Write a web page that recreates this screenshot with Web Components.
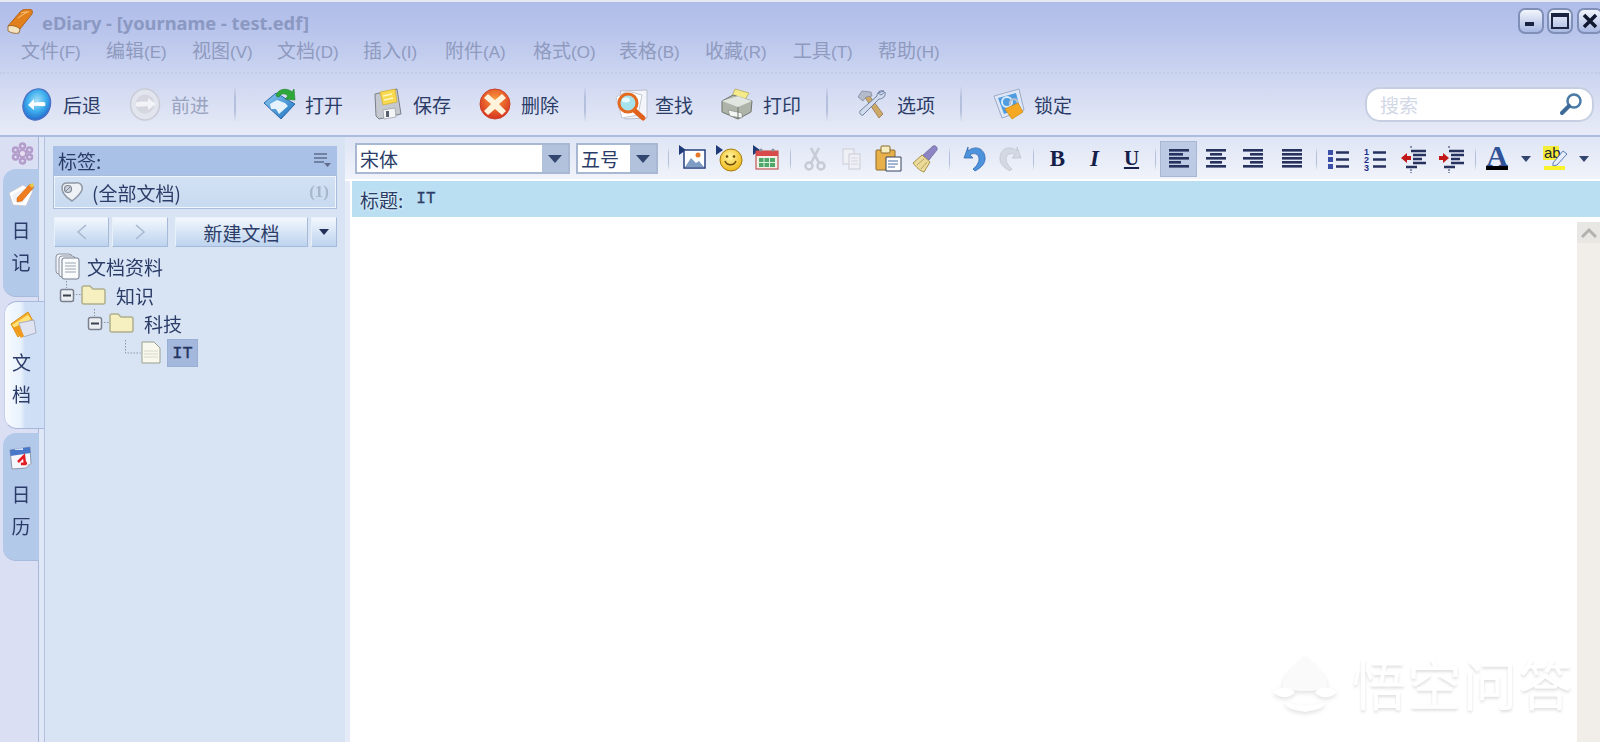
<!DOCTYPE html>
<html lang="zh">
<head>
<meta charset="utf-8">
<title>eDiary</title>
<style>
  html, body { margin: 0; height: 742px; overflow: hidden; background: #fff; }
  body { font: 19px "Noto Sans CJK SC", "Noto Sans", sans-serif; color: #2b3a66; }
</style>
</head>
<body>
<ed-app>
  <ed-header slot="header">
    <ed-tool icon="back" label="后退"></ed-tool>
    <ed-tool icon="forward" label="前进" disabled></ed-tool>
    <ed-sep></ed-sep>
    <ed-tool icon="open" label="打开"></ed-tool>
    <ed-tool icon="save" label="保存"></ed-tool>
    <ed-tool icon="remove" label="删除"></ed-tool>
    <ed-sep></ed-sep>
    <ed-tool icon="find" label="查找"></ed-tool>
    <ed-tool icon="print" label="打印"></ed-tool>
    <ed-sep></ed-sep>
    <ed-tool icon="options" label="选项"></ed-tool>
    <ed-sep style="margin-right:30px"></ed-sep>
    <ed-tool icon="lock" label="锁定"></ed-tool>
  </ed-header>
  <ed-tabs slot="tabs">
    <ed-tab icon="tabdiary" label="日记"></ed-tab>
    <ed-tab icon="tabdocs" label="文档" active></ed-tab>
    <ed-tab icon="tabcal" label="日历"></ed-tab>
  </ed-tabs>
  <ed-sidebar slot="sidebar">
    <ed-tree-row kind="root">文档资料</ed-tree-row>
    <ed-tree-row kind="folder" level="0">知识</ed-tree-row>
    <ed-tree-row kind="folder" level="1">科技</ed-tree-row>
    <ed-tree-row kind="leaf" selected style="margin-top:2px">IT</ed-tree-row>
  </ed-sidebar>
  <ed-formatbar slot="format">
    <ed-fmt icon="picture"></ed-fmt><ed-fmt icon="smile"></ed-fmt><ed-fmt icon="calendar"></ed-fmt>
    <ed-sep small></ed-sep>
    <ed-fmt icon="cut"></ed-fmt><ed-fmt icon="copy"></ed-fmt><ed-fmt icon="paste"></ed-fmt><ed-fmt icon="broom"></ed-fmt>
    <ed-sep small></ed-sep>
    <ed-fmt icon="undo"></ed-fmt><ed-fmt icon="redo"></ed-fmt>
    <ed-sep small style="margin:0 5px 0 4px"></ed-sep>
    <ed-fmt text="B"></ed-fmt><ed-fmt text="I"></ed-fmt><ed-fmt text="U"></ed-fmt>
    <ed-sep small style="margin:0 4px 0 5px"></ed-sep>
    <ed-fmt icon="alignleft" pressed></ed-fmt><ed-fmt icon="aligncenter"></ed-fmt><ed-fmt icon="alignright"></ed-fmt><ed-fmt icon="justify" style="margin-left:2px"></ed-fmt>
    <ed-sep small style="margin:0 2px 0 6px"></ed-sep>
    <ed-fmt icon="bullets"></ed-fmt><ed-fmt icon="numbers"></ed-fmt><ed-fmt icon="outdent" style="margin-left:2px"></ed-fmt><ed-fmt icon="indent" style="margin-left:1px"></ed-fmt>
    <ed-sep small style="margin:0 2px 0 5px"></ed-sep>
    <ed-fmt icon="fontcolor"></ed-fmt><ed-fmt arrow></ed-fmt><ed-fmt icon="highlight"></ed-fmt><ed-fmt arrow></ed-fmt>
  </ed-formatbar>
  <ed-editor slot="editor" doc-title="IT"></ed-editor>
</ed-app>

<script>
const CJK = '"Noto Sans CJK SC", "Noto Sans", sans-serif';

// every icon is drawn in real pixels, the viewBox is the same as its size
const ICONS = {
  back: `<defs><radialGradient id="g" cx=".45" cy=".4" r=".65"><stop offset="0" stop-color="#a8e0f8"/><stop offset=".5" stop-color="#3fb0ee"/><stop offset="1" stop-color="#1f62c8"/></radialGradient></defs>
    <ellipse cx="16" cy="16.5" rx="13.500" ry="16" transform="rotate(22 16 16)" fill="url(#g)" stroke="#4a6fc4" stroke-width="1.2"/>
    <path d="M7 17l6-6v3.500c4 0 8-1 11 0 .5 1 .5 2.500 0 3.500-3 .5-7-.5-11 0v4z" fill="#fff"/>`,
  forward: `<ellipse cx="16" cy="16.500" rx="14.500" ry="15.500" fill="#e2e5ee" stroke="#c9ccd6" stroke-width="1.500"/>
    <circle cx="16" cy="16" r="9.500" fill="#d4d7e0"/>
    <path d="M27 16l-8-6v3.500c-4 0-8-.5-12 1-.5 2-.5 3 0 4 4 .5 8-.5 12 0V22z" fill="#f2f3f7"/>`,
  open: `<defs><linearGradient id="g" x1="0" y1="0" x2="1" y2="1"><stop offset="0" stop-color="#8ccbf2"/><stop offset="1" stop-color="#1b6fc0"/></linearGradient></defs>
    <path d="M1 15L13 5l19 11-14 15z" fill="url(#g)" stroke="#2b6aa8"/>
    <path d="M7 16l7-4 8 3 3 3-9 8-3-5-5 0z" fill="#e6f3fc"/>
    <path d="M13 8C14 1 24-1 29 4l2-3 1 11-10-1 3-3c-3-3-7-3-9 1z" fill="#2fa83a" stroke="#1f7d2a" stroke-width=".6"/>`,
  save: `<path d="M4 6l22-5 4 25-22 5-3-3z" fill="#c5c9cf" stroke="#7a808a"/>
    <path d="M9 4l15-3 2 13-14 3z" fill="#f8d84e" stroke="#c9a52c" stroke-width=".6"/>
    <path d="M12 8l9-2M13 12l9-2" stroke="#fff7c0" stroke-width="1.500"/>
    <path d="M12 22l12-2 1 9-12 2z" fill="#f4f5f7" stroke="#8b9099" stroke-width=".6"/>
    <rect x="15" y="23" width="3" height="6" fill="#586070"/>`,
  remove: `<defs><radialGradient id="g" cx=".5" cy=".35" r=".7"><stop offset="0" stop-color="#fb9b3c"/><stop offset="1" stop-color="#d52a1c"/></radialGradient></defs>
    <circle cx="16" cy="16" r="15" fill="url(#g)" stroke="#c9402a"/>
    <path d="M9 6l7 6 7-6 4 4-7 6 7 7-4 4-7-6-7 6-4-4 7-7-7-6z" fill="#fff3dc"/>`,
  find: `<path d="M7 3l27-1v28l-22 1z" fill="#f3f5fa" stroke="#b9bfd0"/>
    <path d="M3 9l12-6 14 4-4 20-16 3z" fill="#fff" stroke="#c3c8d4"/>
    <path d="M21 22l9 8" stroke="#e2611a" stroke-width="5" stroke-linecap="round"/>
    <circle cx="15" cy="15" r="9" fill="#a7e3ec" stroke="#e46a20" stroke-width="3"/>
    <ellipse cx="13" cy="12" rx="4" ry="2.500" fill="#e6fbff"/>`,
  print: `<path d="M14 1l14 4-5 9-13-3z" fill="#f4ea8a" stroke="#b2ab58" stroke-width=".8"/>
    <path d="M1 13l11-6 19 6-1 11-13 7L1 24z" fill="#aeb4a9" stroke="#70776f"/>
    <path d="M1 13l16 6 14-6-14-5z" fill="#e2e6e0"/>
    <path d="M7 22l14 3v5l-12-2z" fill="#f4f6f4" stroke="#7c837c" stroke-width=".6"/>
    <path d="M17 19v12" stroke="#70776f"/>`,
  options: `<path d="M9 8l4-2 15 20-4 4z" fill="#cda868" stroke="#8d6f3e" stroke-width=".7"/>
    <path d="M3 9l4-6 9 1 1 4-6 1-3 4z" fill="#b4bbcb" stroke="#7a8398" stroke-width=".7"/>
    <path d="M29 3c-4-1-7 1-7 5L5 23c-1 2 1 5 3 4L24 11c4 0 7-3 6-7l-4 3-3-2z" fill="#d3dcec" stroke="#6d80a5" stroke-width="1"/>`,
  lock: `<path d="M2 8L27 1l5 21-22 8z" fill="#dfe7f6" stroke="#9cabc8"/>
    <path d="M6 10l18-5 4 15-16 6z" fill="#4f9de0"/>
    <circle cx="15" cy="14" r="5" fill="none" stroke="#d8ebfa" stroke-width="2"/>
    <path d="M18 17c-1-6 6-8 7.500-3l.5 3" fill="none" stroke="#b9c2d2" stroke-width="2"/>
    <path d="M13 21l13-6 5 9-11 7z" fill="#f5a823" stroke="#d08a10" stroke-width=".7"/>`,
  tabdiary: `<path d="M1 12L15 4l10 6-7 15-13-1z" fill="#fff" stroke="#c8ccd6"/>
    <path d="M4 14l11-6 6 4-6 10-9-1z" fill="#f1f2f6"/>
    <path d="M9 17L22 3l4 3-12 14-5 1z" fill="#ef7d1e" stroke="#c65f0e" stroke-width=".5"/>
    <path d="M21 4l4-2 1 3-2 2z" fill="#e8c84a"/>`,
  tabdocs: `<path d="M2 13L19 1l5 9-15 16z" fill="#f7b42b" stroke="#d98a14"/>
    <path d="M3 14L19 4l3 4-14 11z" fill="#ffe27c"/>
    <path d="M10 12l15-3 2 13-13 4z" fill="#dfe4f0" stroke="#a9b0c4"/>
    <path d="M4 17l6-3 5 11-3 2z" fill="#f19b1d"/>`,
  tabcal: `<path d="M2 5l20-3 1 17-5 4-14 1z" fill="#f6f7fb" stroke="#8f98ad"/>
    <path d="M2 5l20-3 .5 6L2.500 11z" fill="#4a78c8"/>
    <path d="M7 4l8-1v2H7z" fill="#cfe0f8"/>
    <path d="M10 17l6-6 1 8-4 0 6-1" fill="none" stroke="#e41c24" stroke-width="2.500"/>
    <path d="M18 23l5-4-3 0z" fill="#c0c5d2"/>`,
  gear: `<g fill="none" stroke="#b49ccb" stroke-width="2.500"><circle cx="11.500" cy="4" r="2.500"/><circle cx="11.500" cy="19" r="2.500"/><circle cx="4.500" cy="8" r="2.500"/><circle cx="18.500" cy="8" r="2.500"/><circle cx="4.500" cy="15" r="2.500"/><circle cx="18.500" cy="15" r="2.500"/></g>
    <circle cx="11.500" cy="11.500" r="3.500" fill="#e8def0" stroke="#b49ccb" stroke-width="2"/>`,
  tag: `<path d="M2 7c0-4 3-5 5-5h8c5-1 8 2 7 7-2 5-6 8-10 11C7 17 2 13 2 7z" fill="#eef1f6" stroke="#8f97a5" stroke-width="1.500"/>
    <circle cx="8" cy="8" r="3.500" fill="#cdd3dc" stroke="#7f8795" stroke-width="1.200"/>
    <path d="M6 10l4-4" stroke="#7f8795"/>`,
  listmenu: `<path d="M0 2h13M0 6h13M0 10h10" stroke="#5f6c8c" stroke-width="1.500"/><path d="M10 11h7l-3.500 4z" fill="#5f6c8c"/>`,
  searchglass: `<circle cx="15" cy="8" r="6.500" fill="#fff" stroke="#4a7aa8" stroke-width="2.500"/>
    <path d="M10 13l-7 7" stroke="#3d6a96" stroke-width="4" stroke-linecap="round"/>`,

  picture: `<path d="M0 0l7 5-7 5z" fill="#1f3a78"/>
    <rect x="5" y="5" width="21" height="18" fill="#fff" stroke="#24407e" stroke-width="1.500"/>
    <path d="M6 22l6-9 5 5 3-2 5 6z" fill="#7e9cc4"/>
    <circle cx="19" cy="10" r="2.500" fill="#e8792a"/>`,
  smile: `<path d="M0 0l7 5-7 5z" fill="#1f3a78"/>
    <defs><radialGradient id="g" cx=".45" cy=".35" r=".7"><stop offset="0" stop-color="#fff5a0"/><stop offset="1" stop-color="#eeb40e"/></radialGradient></defs>
    <circle cx="15" cy="15" r="11" fill="url(#g)" stroke="#a67c10"/>
    <circle cx="11" cy="11.500" r="1.300" fill="#6b4a08"/><circle cx="18" cy="11.500" r="1.300" fill="#6b4a08"/>
    <path d="M9 16c2 5 9 5 11 0" fill="none" stroke="#6b4a08" stroke-width="1.500"/>`,
  calendar: `<path d="M0 0l7 5-7 5z" fill="#1f3a78"/>
    <rect x="3" y="6" width="22" height="18" fill="#f5f0e6" stroke="#b23a3a"/>
    <rect x="3" y="6" width="22" height="5" fill="#d94a4a"/>
    <circle cx="8" cy="5" r="1.500" fill="#8a8f99"/><circle cx="20" cy="5" r="1.500" fill="#8a8f99"/>
    <rect x="6" y="13" width="16" height="9" fill="#4fa86a"/>
    <path d="M6 17.500h16M11 13v9M16.500 13v9" stroke="#d8f0de"/>`,
  cut: `<g fill="none" stroke="#c6cbd6" stroke-width="2.500"><circle cx="8" cy="21" r="3.500"/><circle cx="20" cy="21" r="3.500"/><path d="M10 18l8-15M18 18L10 3"/></g>`,
  copy: `<g fill="#eef0f5" stroke="#c9cdd8"><rect x="5" y="4" width="11" height="15"/><rect x="11" y="9" width="11" height="15"/></g><path d="M13 13h7M13 16h7M13 19h7" stroke="#d2d6df"/>`,
  paste: `<rect x="1" y="5" width="19" height="20" rx="1" fill="#e8b04a" stroke="#8c6a28"/>
    <rect x="6" y="1" width="9" height="7" rx="1" fill="#f6eec0" stroke="#8c6a28"/>
    <path d="M11 12h15v14H11z" fill="#fff" stroke="#33405f"/>
    <path d="M13 16h10M13 19h10M13 22h7" stroke="#4a6aa8"/>`,
  broom: `<path d="M1 18l9-8 8 7-6 10c-4-1-8-5-11-9z" fill="#eadb9a" stroke="#a8924a"/>
    <path d="M5 20l7-6M9 24l6-7" stroke="#b8a35a"/>
    <path d="M11 10l10-9c2-1 5 1 4 4l-8 10z" fill="#8d84c4" stroke="#5e578f" stroke-width=".6"/>`,
  undo: `<path d="M8 2L4 13l9 0-3-3c4-3 9-1 9 4 0 3-2 7-6 10l2 2c6-3 11-8 10-14C24 3 15 0 8 6z" fill="#4c93dc" stroke="#2a5fa8" stroke-width=".7"/>`,
  redo: `<path d="M20 2l4 11-9 0 3-3c-4-3-9-1-9 4 0 3 2 7 6 10l-2 2C7 23 2 18 3 12 4 3 13 0 20 6z" fill="#d3d8e2" stroke="#bcc2cf" stroke-width=".7"/>`,
  alignleft: bars([20, 14, 20, 12, 20], 'l'),
  aligncenter: bars([20, 12, 20, 12, 20], 'c'),
  alignright: bars([20, 13, 20, 13, 20], 'r'),
  justify: bars([20, 20, 20, 20, 20], 'l'),
  bullets: `<g fill="#3a50a8"><rect x="4" y="5" width="5" height="5"/><rect x="4" y="12" width="5" height="5"/><rect x="4" y="19" width="5" height="5"/></g>
    <path d="M12 7.500h13M12 14.500h13M12 21.500h13" stroke="#27325f" stroke-width="2.500"/>`,
  numbers: `<g fill="#1d2f8a" font-family="Liberation Sans" font-weight="700" font-size="9"><text x="3" y="10">1</text><text x="3" y="18">2</text><text x="3" y="26">3</text></g>
    <path d="M12 7.500h13M12 14.500h13M12 21.500h13" stroke="#27325f" stroke-width="2.500"/>`,
  outdent: `<path d="M1 13l6-5v3h4v4H7v3z" fill="#c01818"/>
    <path d="M11 6h15M13 10h13M13 14h9M13 18h13M6 22h11" stroke="#27325f" stroke-width="2.500"/>
    <path d="M11 1v3M11 24v4" stroke="#27325f" stroke-dasharray="2 1"/>`,
  indent: `<path d="M11 13L5 8v3H1v4h4v3z" fill="#c01818"/>
    <path d="M11 6h15M13 10h13M13 14h9M13 18h13M6 22h11" stroke="#27325f" stroke-width="2.500"/>
    <path d="M11 1v3M11 24v4" stroke="#27325f" stroke-dasharray="2 1"/>`,
  fontcolor: `<text x="14" y="21" text-anchor="middle" font-family="Liberation Serif" font-weight="700" font-size="30" fill="#2f5298">A</text><rect x="3" y="21" width="22" height="4" fill="#000"/>`,
  highlight: `<rect x="2" y="1" width="16" height="14" fill="#f4ee3a"/>
    <text x="3" y="13" font-family="Liberation Sans" font-size="15" fill="#1a2230">ab</text>
    <path d="M12 18L22 6l4 3-10 11-4 1z" fill="#e6edf8" stroke="#5b7fb8"/>
    <rect x="3" y="21" width="21" height="4" fill="#f9f32c"/>`
};

function bars(rows, align) {
  const w = 20;
  let out = '';
  rows.forEach((len, i) => {
    const x = 4 + (align === 'l' ? 0 : align === 'c' ? (w - len) / 2 : w - len);
    out += `<rect x="${x}" y="${4 + i * 4}" width="${len}" height="2.600" fill="#27325f"/>`;
  });
  return out;
}

class EdIcon extends HTMLElement {
  constructor() {
    super();
    this.attachShadow({ mode: 'open' });
  }

  connectedCallback() {
    const size = this.getAttribute('size') || 32;
    const name = this.getAttribute('name');
    this.shadowRoot.innerHTML = `
      <style>:host { display: block; width: ${size}px; height: ${size}px; flex: none; } svg { display: block; overflow: visible; }</style>
      <svg width="${size}" height="${size}" viewBox="0 0 ${size} ${size}">${ICONS[name] || ''}</svg>`;
  }
}

class EdApp extends HTMLElement {
  constructor() {
    super();
    this.attachShadow({ mode: 'open' });
    this.shadowRoot.innerHTML = `
      <style>
        :host { display: flex; flex-direction: column; width: 1600px; height: 742px; overflow: hidden; filter: blur(.3px); }
        .main { flex: 1; display: flex; min-height: 0; }
        .right { flex: 1; display: flex; flex-direction: column; min-width: 0; background: #e4ebf7; }
        ::slotted([slot="editor"]) { flex: 1; }
      </style>
      <slot name="header"></slot>
      <div class="main">
        <slot name="tabs"></slot>
        <slot name="sidebar"></slot>
        <div class="right">
          <slot name="format"></slot>
          <slot name="editor"></slot>
        </div>
      </div>`;
  }
}

class EdHeader extends HTMLElement {
  constructor() {
    super();
    this.attachShadow({ mode: 'open' });
  }

  connectedCallback() {
    const menus = [['文件', 'F', 59], ['编辑', 'E', 60], ['视图', 'V', 59], ['文档', 'D', 60], ['插入', 'I', 56], ['附件', 'A', 62],
      ['格式', 'O', 60], ['表格', 'B', 60], ['收藏', 'R', 62], ['工具', 'T', 59], ['帮助', 'H', 60]];
    this.shadowRoot.innerHTML = `
      <style>
        :host {
          display: block;
          height: 137px;
          box-sizing: border-box;
          padding-top: 7px;
          overflow: hidden;
          border-top: 2px solid #e6e9f4;
          border-bottom: 2px solid #abbcdf;
          background: linear-gradient(#b0bde9 0, #b7c3eb 25px, #c6d0ef 60px, #d9dff3 100px, #e7ebf7 130px);
        }
        .title { display: flex; height: 29px; padding-left: 7px; }
        .name { margin: -1px 0 0 9px; font: 700 18.300px/30px "Noto Sans", sans-serif; color: #8a98c2; white-space: nowrap; }
        .win { margin-left: auto; margin-top: -1px; display: flex; gap: 3px; margin-right: -3px; }
        .win div {
          width: 26px; height: 26px; box-sizing: border-box; border: 2px solid #7f8fb8; border-radius: 7px;
          background: linear-gradient(#f2f5fc, #a8b8e2); display: flex; align-items: center; justify-content: center;
        }
        .menu { display: flex; gap: 26px; height: 24px; padding-left: 21px; align-items: center; font: 19px/24px ${CJK}; color: #8f9abf; }
        .menu > span { display: block; white-space: nowrap; }
        .menu span span { font: 17px "Liberation Sans", sans-serif; }
        .dots { margin-top: 10px; height: 0; border-top: 2px dotted #c3cce6; }
        .tools { display: flex; align-items: center; height: 56px; padding-left: 21px; margin-top: 2px; }
        .search {
          margin-left: auto; margin-right: 6px; width: 229px; height: 35px; box-sizing: border-box; border: 2px solid #c6cfe2;
          border-radius: 15px; background: #fff; display: flex; align-items: center; justify-content: space-between;
          padding: 0 11px 0 13px; font: 19px ${CJK}; color: #d3d8e7;
        }
      </style>
      <div class="title">
        <svg width="26" height="26" viewBox="0 0 26 26">
          <path d="M1 17L13 3c2-2 4-3 7-3h2c3 0 4 2 3 5L13 20z" fill="#e2801c" stroke="#a4560e" stroke-width=".8"/>
          <path d="M1 17c4-1 9 0 12 3l-1 4c-3 1-8 0-11-2z" fill="#f4e3c0" stroke="#8a5a1e" stroke-width=".8"/>
          <path d="M14 4c2-1 6-1 8-1M11 9l9-6" stroke="#f8c680" fill="none"/>
        </svg>
        <div class="name">eDiary - [yourname - test.edf]</div>
        <div class="win">
          <div><svg width="12" height="12"><rect x="0" y="7" width="9" height="4" fill="#1a2440"/></svg></div>
          <div style="margin-right:1px"><svg width="18" height="16"><rect x="1" y="1" width="16" height="14" fill="none" stroke="#1a2440" stroke-width="2"/><rect x="1" y="1" width="16" height="3" fill="#1a2440"/></svg></div>
          <div><svg width="16" height="16"><path d="M2 2l12 12M14 2L2 14" stroke="#101830" stroke-width="3.500"/></svg></div>
        </div>
      </div>
      <div class="menu">${menus.map(([t, k, w]) => `<span style="width:${w}px">${t}<span>(${k})</span></span>`).join('')}</div>
      <div class="dots"></div>
      <div class="tools">
        <slot></slot>
        <div class="search">搜索<ed-icon name="searchglass" size="22"></ed-icon></div>
      </div>`;
  }
}

class EdTool extends HTMLElement {
  constructor() {
    super();
    this.attachShadow({ mode: 'open' });
  }

  connectedCallback() {
    const off = this.hasAttribute('disabled');
    this.shadowRoot.innerHTML = `
      <style>
        :host { display: flex; align-items: center; gap: 10px; width: 80px; margin-right: 28px; font: 19px ${CJK}; color: ${off ? '#9aa3bf' : '#2b3c68'}; white-space: nowrap; }
      </style>
      <ed-icon name="${this.getAttribute('icon')}" size="32"></ed-icon>
      <span>${this.getAttribute('label')}</span>`;
  }
}

class EdSep extends HTMLElement {
  constructor() {
    super();
    this.attachShadow({ mode: 'open' });
  }

  connectedCallback() {
    const small = this.hasAttribute('small');
    this.shadowRoot.innerHTML = `
      <style>
        :host { display: block; flex: none; width: ${small ? 1 : 2}px; height: ${small ? 24 : 36}px; margin: ${small ? '0 5px' : '0 27px 0 -3px'};
          background: linear-gradient(transparent, #b4c0dc 30%, #b4c0dc 70%, transparent); }
      </style>`;
  }
}

class EdTabs extends HTMLElement {
  constructor() {
    super();
    this.attachShadow({ mode: 'open' });
    this.shadowRoot.innerHTML = `
      <style>
        :host {
          display: flex; flex-direction: column; flex: none; width: 45px; box-sizing: border-box; height: 100%;
          background: linear-gradient(90deg, #dbdff3 38px, #a9b7da 38px, #a9b7da 39px, #dfe6f6 39px, #dfe6f6 44px, #b2c0df 44px);
        }
        .gear { padding: 5px 0 0 11px; height: 27px; }
      </style>
      <div class="gear"><ed-icon name="gear" size="23"></ed-icon></div>
      <slot></slot>`;
  }
}

class EdTab extends HTMLElement {
  constructor() {
    super();
    this.attachShadow({ mode: 'open' });
  }

  connectedCallback() {
    const active = this.hasAttribute('active');
    const chars = this.getAttribute('label').split('');
    this.shadowRoot.innerHTML = `
      <style>
        :host {
          display: flex; flex-direction: column; align-items: center; box-sizing: border-box; font: 19px/32px ${CJK}; color: #2b3c68;
          height: 128px; width: ${active ? 40 : 36}px; margin: 0 0 4px ${active ? 4 : 3}px; padding-top: ${active ? 9 : 12}px;
          padding-right: ${active ? 6 : 0}px;
          border-radius: 13px 0 0 13px;
          background: ${active ? 'linear-gradient(90deg, #f8fbff 0, #e8f1fc 16px, #cfe0f6 20px)' : '#b2c9ea'};
          ${active ? 'border-left: 1px solid #c5d2ea; border-bottom: 1px solid #a9b7da; border-top: 1px solid #a9b7da;' : 'border-bottom: 1px solid #a9bbdc;'}
        }
        ed-icon { margin-bottom: ${active ? 9 : 7}px; }
        span { display: block; }
      </style>
      <ed-icon name="${this.getAttribute('icon')}" size="26"></ed-icon>
      ${chars.map(c => `<span>${c}</span>`).join('')}`;
  }
}

class EdSidebar extends HTMLElement {
  constructor() {
    super();
    this.attachShadow({ mode: 'open' });
    this.shadowRoot.innerHTML = `
      <style>
        :host { display: block; flex: none; width: 300px; box-sizing: border-box; height: 100%; background: #d8e4f4; padding: 9px 8px 0 8px; font: 19px ${CJK}; color: #2b3c68; }
        .head {
          height: 29px; background: #a9c1e6; display: flex; align-items: center; justify-content: space-between;
          padding: 0 6px 0 5px; line-height: 29px;
        }
        .all {
          height: 34px; box-sizing: border-box; display: flex; align-items: center; gap: 9px; padding: 0 7px 0 6px;
          background: linear-gradient(#d3e1f3, #c8daf0); border: 1px solid #a9bdda; outline: 1px solid #eef5fc; outline-offset: -2px;
        }
        .all b { margin-left: auto; font: 700 17px "Liberation Serif", serif; color: #a8b6cc; }
        .nav { display: flex; margin: 8px 0 5px 1px; height: 30px; }
        .btn {
          height: 30px; box-sizing: border-box; background: linear-gradient(#f2f7fd, #bdd3ee); border: 1px solid #a5b9d8;
          border-top-color: #e8f0fa; border-left-color: #e8f0fa; display: flex; align-items: center; justify-content: center;
        }
      </style>
      <div class="head">标签:<ed-icon name="listmenu" size="17"></ed-icon></div>
      <div class="all"><ed-icon name="tag" size="23"></ed-icon><span>(全部文档)</span><b>(1)</b></div>
      <div class="nav">
        <div class="btn" style="width:55px"><svg width="12" height="16"><path d="M10 1L2 8l8 7" fill="none" stroke="#a6b8d0" stroke-width="1.500"/></svg></div>
        <div class="btn" style="width:56px;margin-left:3px"><svg width="12" height="16"><path d="M2 1l8 7-8 7" fill="none" stroke="#a6b8d0" stroke-width="1.500"/></svg></div>
        <div class="btn" style="width:133px;margin-left:7px">新建文档</div>
        <div class="btn" style="width:26px;margin-left:3px"><svg width="10" height="6"><path d="M0 0h10L5 6z" fill="#22305a"/></svg></div>
      </div>
      <slot></slot>`;
  }
}

class EdTreeRow extends HTMLElement {
  constructor() {
    super();
    this.attachShadow({ mode: 'open' });
  }

  connectedCallback() {
    const kind = this.getAttribute('kind');
    const level = Number(this.getAttribute('level') || 0);
    const selected = this.hasAttribute('selected');
    const parts = {
      root: `<svg width="27" height="27" style="margin-left:2px"><rect x="1" y="1" width="16" height="20" rx="3" fill="#eef1f5" stroke="#8d95a3"/><rect x="4" y="3" width="16" height="21" rx="3" fill="#f4f6f9" stroke="#8d95a3"/><rect x="7" y="5" width="17" height="21" rx="2" fill="#fafbfc" stroke="#737c8c"/><path d="M10 10h11M10 13h11M10 16h11M10 19h11" stroke="#9ca4b1"/></svg>`,
      folder: `<svg width="50" height="28" style="margin-left:${4 + level * 28}px">
        <path d="M9.500 0v7M16 13.500h9" stroke="#8d95a3" stroke-dasharray="1.500 1.500"/>
        <rect x="3.500" y="8.500" width="13" height="12" rx="2" fill="#eceff2" stroke="#7a8190" stroke-width="1.500"/>
        <path d="M6 14.500h8" stroke="#3a4250" stroke-width="2"/>
        <path d="M25 7c0-1 1-2 2-2h6l3 3h10c1 0 2 1 2 2v11c0 1-1 2-2 2H27c-1 0-2-1-2-2z" fill="#f6efbf" stroke="#aeb08f" stroke-width="1.500"/></svg>`,
      leaf: `<svg width="38" height="28" style="margin-left:69px">
        <path d="M3.500 1v13h15" fill="none" stroke="#8d95a3" stroke-dasharray="1.500 1.500"/>
        <path d="M20 3h12l6 6v15H20z" fill="#f8f8ee" stroke="#98a08f"/>
        <path d="M22 12h14M22 15h14M22 18h14" stroke="#d6dbc8"/></svg>`
    };
    const gap = { root: 5, folder: 9, leaf: 7 }[kind];
    this.shadowRoot.innerHTML = `
      <style>
        :host { display: flex; align-items: center; height: ${kind === 'root' ? 29 : 28}px; gap: ${gap}px; font: 19px ${CJK}; color: #2b3c68; white-space: nowrap; }
        svg { flex: none; overflow: visible; }
        .sel { display: flex; align-items: center; justify-content: center; width: 31px; height: 28px; background: #a3b8dc;
          box-sizing: border-box; border: 1px solid #9aafd4; font: 17px "Liberation Mono", monospace; -webkit-text-stroke: .4px #24345f; color: #24345f; }
      </style>
      ${parts[kind]}
      ${selected ? '<span class="sel"><slot></slot></span>' : '<slot></slot>'}`;
  }
}

class EdFormatbar extends HTMLElement {
  constructor() {
    super();
    this.attachShadow({ mode: 'open' });
    this.shadowRoot.innerHTML = `
      <style>
        :host {
          display: flex; align-items: center; flex: none; height: 44px; box-sizing: border-box; padding: 1px 0 0 10px;
          background: linear-gradient(#dfe5f5, #f0f3fa); font: 19px ${CJK}; color: #2b3c68; border-bottom: 2px solid #fff;
        }
        .combo { display: flex; height: 31px; box-sizing: border-box; border: 2px solid #a8b8d2; background: #fff; }
        .combo span { flex: 1; padding-left: 3px; line-height: 27px; }
        .combo i { width: 26px; background: #b3c2dc; display: flex; align-items: center; justify-content: center; }
      </style>
      <div class="combo" style="width:215px"><span>宋体</span><i><svg width="14" height="8"><path d="M0 0h14L7 8z" fill="#33466f"/></svg></i></div>
      <div class="combo" style="width:82px;margin-left:6px"><span>五号</span><i><svg width="14" height="8"><path d="M0 0h14L7 8z" fill="#33466f"/></svg></i></div>
      <ed-sep small style="margin-left:10px"></ed-sep>
      <slot></slot>`;
  }
}

class EdFmt extends HTMLElement {
  constructor() {
    super();
    this.attachShadow({ mode: 'open' });
  }

  connectedCallback() {
    const text = this.getAttribute('text');
    const arrow = this.hasAttribute('arrow');
    const pressed = this.hasAttribute('pressed');
    const faces = {
      B: 'font: 700 23px "Liberation Serif", serif; color: #14204a;',
      I: 'font: italic 700 23px "Liberation Serif", serif; color: #14204a;',
      U: 'font: 700 21px "Liberation Serif", serif; color: #14204a; text-decoration: underline;'
    };
    let inner = `<ed-icon name="${this.getAttribute('icon')}" size="28"></ed-icon>`;
    if (text) inner = `<span style='${faces[text]}'>${text}</span>`;
    if (arrow) inner = '<svg width="10" height="6"><path d="M0 0h10L5 6z" fill="#33466f"/></svg>';
    this.shadowRoot.innerHTML = `
      <style>
        :host {
          display: flex; align-items: center; justify-content: center; flex: none; height: 36px; box-sizing: border-box;
          width: ${arrow ? 21 : 37}px;
          ${pressed ? 'background: #bccbe3; border: 1px solid #a8b8d4;' : ''}
        }
      </style>
      ${inner}`;
  }
}

class EdEditor extends HTMLElement {
  constructor() {
    super();
    this.attachShadow({ mode: 'open' });
  }

  connectedCallback() {
    this.shadowRoot.innerHTML = `
      <style>
        :host { display: flex; flex-direction: column; position: relative; background: #fff; min-height: 0; margin-left: 5px; font: 19px ${CJK}; }
        .strip {
          flex: none; height: 36px; margin-left: 2px; background: #bbdff2; display: flex; align-items: center; padding-left: 8px;
          color: #2b3c68; text-shadow: 0 0 3px #fff;
        }
        .strip b { margin-left: 13px; font: 16px "Liberation Mono", monospace; -webkit-text-stroke: .3px #2b3c68; text-shadow: none; }
        .body { flex: 1; display: flex; justify-content: flex-end; padding-top: 5px; }
        .scroll { width: 23px; background: #f1eeea; }
        .up { height: 21px; background: #e9e7e4; display: flex; align-items: center; justify-content: center; }
        .mark { position: absolute; right: 26px; bottom: 28px; display: flex; align-items: center; gap: 14px; color: #fff;
          font: 54px/62px ${CJK}; text-shadow: 0 2px 3px rgba(0,0,0,.13); letter-spacing: 1.500px; }
        .mark svg { filter: drop-shadow(0 2px 2px rgba(0,0,0,.12)); }
      </style>
      <div class="strip">标题:<b>${this.getAttribute('doc-title')}</b></div>
      <div class="body"><div class="scroll"><div class="up"><svg width="16" height="10"><path d="M1 9l7-7 7 7" fill="none" stroke="#b4b2ae" stroke-width="3"/></svg></div></div></div>
      <div class="mark">
        <svg width="66" height="58" viewBox="0 0 66 58">
          <path d="M33 2c8 10 24 18 22 32-6 4-38 4-44 0C9 20 25 12 33 2z" fill="#fafafa"/>
          <path d="M1 38c10-8 18-4 22 0-4 6-14 8-22 0zM65 38c-10-8-18-4-22 0 4 6 14 8 22 0zM12 48c10 4 32 4 42 0-4 8-12 8-21 10-9-2-17-2-21-10z" fill="#fff"/>
        </svg>
        <span>悟空问答</span>
      </div>`;
  }
}

customElements.define('ed-icon', EdIcon);
customElements.define('ed-app', EdApp);
customElements.define('ed-header', EdHeader);
customElements.define('ed-tool', EdTool);
customElements.define('ed-sep', EdSep);
customElements.define('ed-tabs', EdTabs);
customElements.define('ed-tab', EdTab);
customElements.define('ed-sidebar', EdSidebar);
customElements.define('ed-tree-row', EdTreeRow);
customElements.define('ed-formatbar', EdFormatbar);
customElements.define('ed-fmt', EdFmt);
customElements.define('ed-editor', EdEditor);
</script>
</body>
</html>
